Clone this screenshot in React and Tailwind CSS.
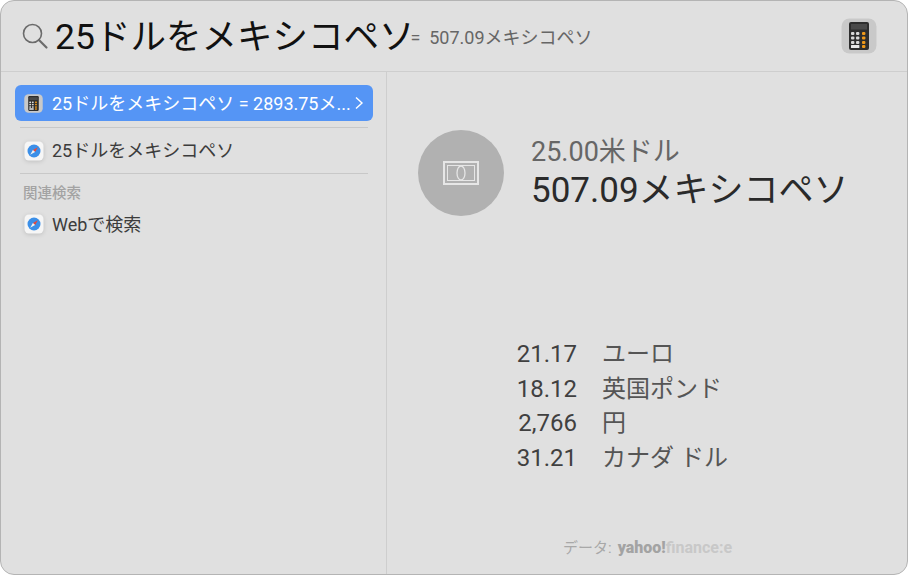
import React from "react";

function CalcIcon({ size = 20, className = "" }) {
  return (
    <svg width={size} height={size} viewBox="0 0 36 36" className={className}>
      <rect x="0.5" y="0.5" width="35" height="35" rx="8" fill="#c9c9c9" />
      <rect x="8" y="4" width="20" height="28" rx="2" fill="#2e2e2e" />
      <rect x="10" y="6" width="16" height="5.5" fill="#4a4a4a" />
      {[14, 18.5, 23].map((y) =>
        [10, 15, 21].map((x, i) => (
          <rect key={`${x}-${y}`} x={x} y={y} width="3.4" height="3" rx="1" fill={i === 2 ? "#f09a1a" : "#d8d8d8"} />
        ))
      )}
      <rect x="10" y="27" width="8.4" height="3" rx="0.5" fill="#e8e8e8" />
      <rect x="21" y="27" width="3.4" height="3" rx="1" fill="#f09a1a" />
    </svg>
  );
}

function SafariIcon() {
  return (
    <svg width="20" height="20" viewBox="0 0 20 20" className="shrink-0 drop-shadow-sm">
      <rect x="0.5" y="0.5" width="19" height="19" rx="4.5" fill="#f6f6f6" />
      <circle cx="10" cy="10" r="6.5" fill="#3b8fe8" />
      <path d="M13.8 6.2L8.9 8.9L11.1 11.1Z" fill="#e8483a" />
      <path d="M6.2 13.8L8.9 8.9L11.1 11.1Z" fill="#f2f2f2" />
    </svg>
  );
}

function BillIcon() {
  return (
    <svg width="36" height="24" viewBox="0 0 36 24" fill="none" stroke="#e6e6e6">
      <rect x="1" y="1" width="34" height="22" strokeWidth="2" />
      <rect x="4.5" y="4.5" width="27" height="15" strokeWidth="1" />
      <ellipse cx="18" cy="12" rx="4" ry="7" strokeWidth="1.3" fill="#b1b1b1" />
    </svg>
  );
}

const rates = [
  ["21.17", "ユーロ"],
  ["18.12", "英国ポンド"],
  ["2,766", "円"],
  ["31.21", "カナダ ドル"],
];

export default function App() {
  return (
    <div className="w-[910px] h-[577px] bg-white font-['Roboto','Noto_Sans_CJK_JP',sans-serif]">
      <div className="w-[908px] h-[575px] bg-[#e0e0e0] border border-[#b4b4b4] rounded-[14px] flex flex-col overflow-hidden">
        <div className="h-[71px] shrink-0 border-b border-[#cecece] flex items-center pl-[20px] pr-[30px]">
          <svg width="28" height="28" viewBox="0 0 28 28" fill="none" stroke="#6b6b6b" className="shrink-0">
            <circle cx="11.5" cy="11.5" r="9" strokeWidth="1.6" />
            <path d="M18 18L25.5 25.5" strokeWidth="2.2" strokeLinecap="round" />
          </svg>
          <span className="ml-[6px] pt-[3px] text-[35.5px] leading-none text-[#111] whitespace-nowrap">25ドルをメキシコペソ</span>
          <span className="-ml-[4px] pt-[2px] text-[18px] text-[#666] whitespace-nowrap">=&nbsp; 507.09メキシコペソ</span>
          <CalcIcon size={36} className="ml-auto" />
        </div>

        <div className="flex flex-1 min-h-0">
          <div className="w-[386px] shrink-0 border-r border-[#cecece] pt-[13px] pl-[14px] pr-[13px]">
            <div className="h-[36px] rounded-[6px] bg-[#5595f5] flex items-center pl-[9px] pr-[9px] text-white text-[18px]">
              <CalcIcon size={19} />
              <span className="ml-[9px] whitespace-nowrap">25ドルをメキシコペソ = 2893.75メ...</span>
              <svg width="10" height="14" viewBox="0 0 10 14" fill="none" stroke="#fff" strokeWidth="1.4" className="ml-auto shrink-0">
                <path d="M2 1.5L8 7L2 12.5" />
              </svg>
            </div>
            <div className="mt-[6px] mx-[5px] border-t border-[#c8c8c8]" />
            <div className="h-[45px] flex items-center pl-[9px] text-[18px] text-[#3c3c3c]">
              <SafariIcon />
              <span className="ml-[8px] whitespace-nowrap">25ドルをメキシコペソ</span>
            </div>
            <div className="mx-[5px] border-t border-[#c8c8c8]" />
            <div className="mt-[10px] pl-[8px] h-[20px] text-[14.5px] leading-[20px] font-medium text-[#a3a3a3]">関連検索</div>
            <div className="h-[40px] flex items-center pl-[9px] text-[18px] text-[#3c3c3c]">
              <SafariIcon />
              <span className="ml-[8px] whitespace-nowrap">Webで検索</span>
            </div>
          </div>

          <div className="flex-1 flex flex-col pl-[31px] pt-[58px]">
            <div className="flex items-center">
              <div className="w-[86px] h-[86px] rounded-full bg-[#b1b1b1] flex items-center justify-center shrink-0">
                <BillIcon />
              </div>
              <div className="ml-[27px] pt-[3px]">
                <div className="text-[27px] leading-[33px] text-[#666] whitespace-nowrap">25.00米ドル</div>
                <div className="text-[35px] leading-[44px] text-[#2a2a2a] whitespace-nowrap">507.09メキシコペソ</div>
              </div>
            </div>
            <div className="mt-[121px] grid grid-cols-[159px_1fr] gap-x-[25px] text-[24px] leading-[34.7px] text-[#404040]">
              {rates.map(([value, label]) => (
                <React.Fragment key={label}>
                  <div className="text-right">{value}</div>
                  <div className="text-[#555] whitespace-nowrap">{label}</div>
                </React.Fragment>
              ))}
            </div>
            <div className="mt-auto mb-[14px] ml-[145px] flex items-center text-[15px] whitespace-nowrap text-[#a8a8a8]">
              <span>データ:</span>
              <span className="ml-[6px] text-[16px] font-black text-[#a3a3a3]">yahoo!</span>
              <span className="text-[16px] font-bold text-[#c8c8c8]">finance:e</span>
            </div>
          </div>
        </div>
      </div>
    </div>
  );
}
